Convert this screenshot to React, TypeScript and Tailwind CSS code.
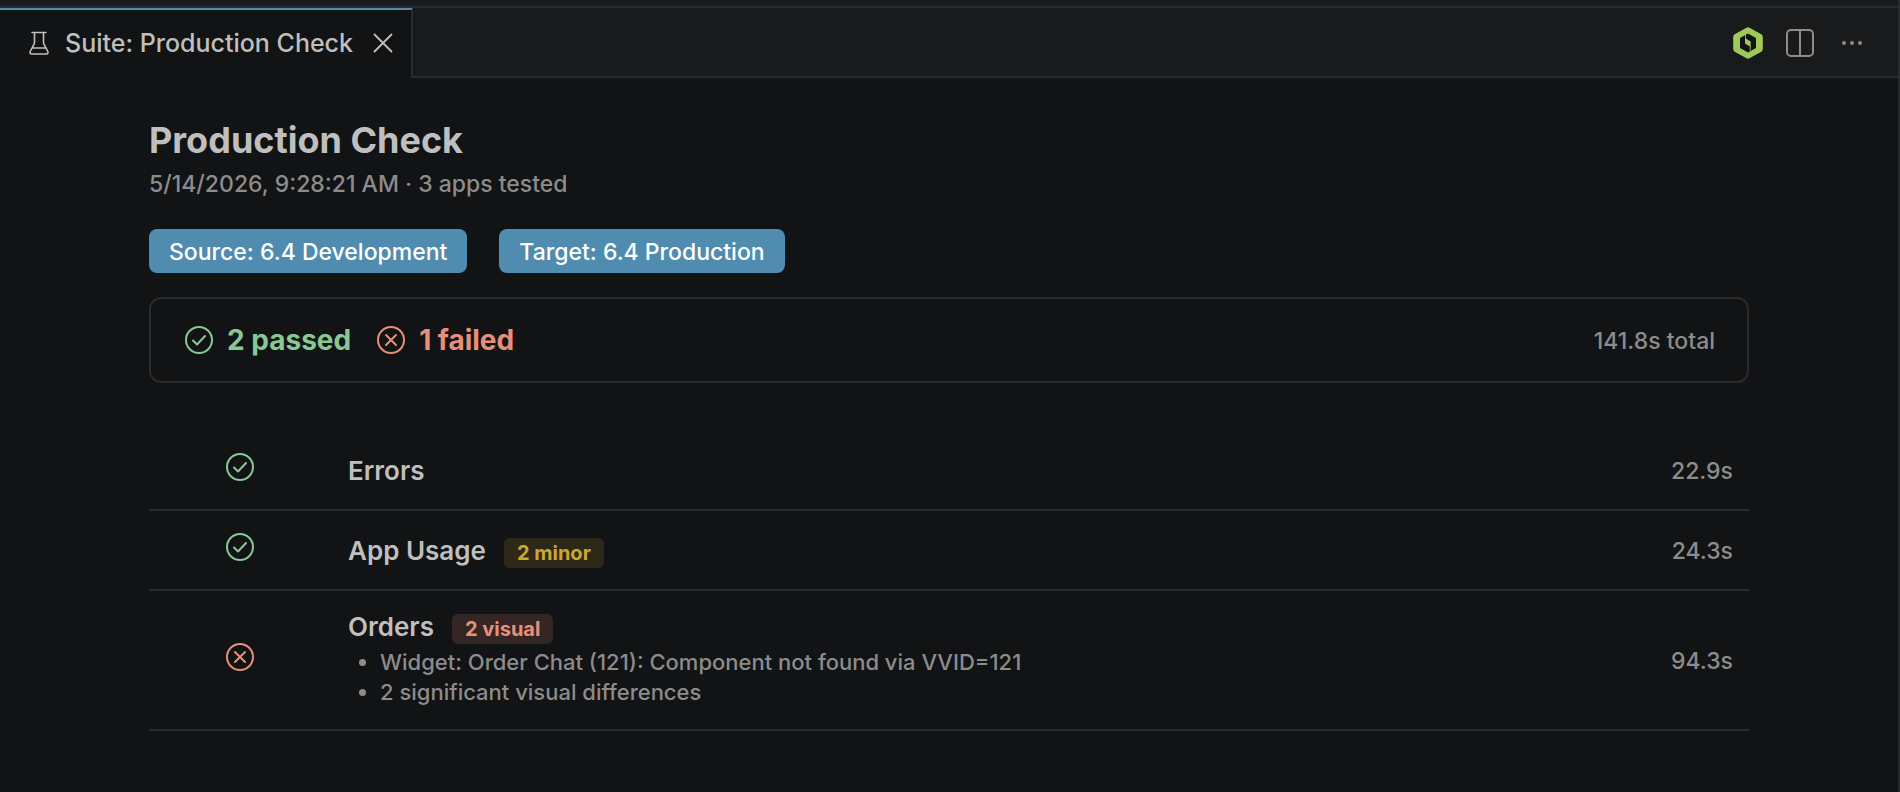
import type { ReactNode } from 'react';

type Status = 'pass' | 'fail';

interface AppResult {
  name: string;
  status: Status;
  time: string;
  tag?: { label: string; kind: 'minor' | 'visual' };
  notes?: string[];
}

const results: AppResult[] = [
  { name: 'Errors', status: 'pass', time: '22.9s' },
  { name: 'App Usage', status: 'pass', time: '24.3s', tag: { label: '2 minor', kind: 'minor' } },
  {
    name: 'Orders',
    status: 'fail',
    time: '94.3s',
    tag: { label: '2 visual', kind: 'visual' },
    notes: [
      'Widget: Order Chat (121): Component not found via VVID=121',
      '2 significant visual differences',
    ],
  },
];

const tagStyles = {
  minor: 'bg-[#2d2818] text-[#c9a931]',
  visual: 'bg-[#342624] text-[#e88f7a]',
};

function StatusIcon({ status }: { status: Status }) {
  const color = status === 'pass' ? 'text-[#86c995]' : 'text-[#e88f7a]';
  return (
    <svg
      className={`block size-8 ${color}`}
      viewBox="0 0 32 32"
      fill="none"
      stroke="currentColor"
      strokeWidth="2"
      strokeLinecap="round"
      strokeLinejoin="round"
    >
      <circle cx="16" cy="16" r="13" />
      {status === 'pass' ? <path d="M10 16.5l4 4 8-8.5" /> : <path d="M11 11l10 10M21 11L11 21" />}
    </svg>
  );
}

function BeakerIcon() {
  return (
    <svg
      className="block size-8 text-[#bfbfbf]"
      viewBox="0 0 32 32"
      fill="none"
      stroke="currentColor"
      strokeWidth="1.6"
      strokeLinecap="round"
      strokeLinejoin="round"
    >
      <path d="M9 5.5h14M11.5 5.5V15c0 1-.3 1.800-.7 2.700L7.200 24.500c-.6 1.300.1 2.500 1.500 2.500h14.600c1.400 0 2.100-1.200 1.500-2.500L21.200 17.700c-.4-.9-.7-1.700-.7-2.700V5.500M9.500 21h13" />
    </svg>
  );
}

function Badge({ children }: { children: ReactNode }) {
  return (
    <span className="rounded-lg bg-[#4f8cb0] px-5 pt-[7px] pb-[5px] text-[23px] leading-8 font-medium text-white">
      {children}
    </span>
  );
}

function TabBar() {
  return (
    <header className="flex border-t-2 border-[#2a2b2c] bg-[#191a1b]">
      <div className="flex h-[70px] items-center border-t-2 border-r-2 border-t-[#4f8cb0] border-r-[#2a2b2c] bg-[#121314] pr-3 pb-0.5 pl-[23px]">
        <BeakerIcon />
        <span className="ml-2.5 text-[25px] leading-8 font-medium text-[#bfbfbf]">Suite: Production Check</span>
        <button type="button" aria-label="Close tab" className="ml-3.5 text-[#bfbfbf]">
          <svg className="block size-8" viewBox="0 0 32 32" stroke="currentColor" strokeWidth="1.8" strokeLinecap="round">
            <path d="M7.5 7.500l17 17M24.500 7.500l-17 17" />
          </svg>
        </button>
      </div>
      <div className="flex flex-1 items-center justify-end gap-5 border-b-2 border-[#2a2b2c] pt-0.5 pr-[30px] text-[#8c8c8c]">
        <button type="button" aria-label="Run suite">
          <svg className="block size-8" viewBox="0 0 32 32">
            <path
              d="M14.500.700q1.500-.9 3 0l11.800 6.600q1.500.9 1.500 2.600v12.200q0 1.700-1.500 2.600l-11.800 6.600q-1.500.9-3 0L2.700 24.700q-1.500-.9-1.500-2.600V9.900q0-1.700 1.500-2.600z"
              fill="#a0c957"
            />
            <path d="M16 6.500l8 4.500v10l-8 4.500L8 21V11z" fill="#121314" />
            <path d="M13 7.500h.8v4l4.900 3v9l-.9.5v-4.500l-4.800-3z" fill="#a0c957" />
          </svg>
        </button>
        <button type="button" aria-label="Split editor">
          <svg className="block size-8" viewBox="0 0 32 32" fill="none" stroke="currentColor" strokeWidth="2">
            <rect x="3" y="3" width="26" height="26" rx="4" />
            <path d="M16 3v26" />
          </svg>
        </button>
        <button type="button" aria-label="More actions">
          <svg className="block size-8" viewBox="0 0 32 32" fill="currentColor">
            <circle cx="8" cy="16" r="2" />
            <circle cx="16" cy="16" r="2" />
            <circle cx="24" cy="16" r="2" />
          </svg>
        </button>
      </div>
    </header>
  );
}

function ResultRow({ result }: { result: AppResult }) {
  return (
    <tr className="h-20">
      <td className="w-[183px] border-b-2 border-[#2a2b2c] pr-px pb-1.5">
        <div className="flex justify-center">
          <StatusIcon status={result.status} />
        </div>
      </td>
      <td className="border-b-2 border-[#2a2b2c] px-4 pt-[19px] pb-[17px]">
        <div className="flex items-center gap-[18px]">
          <span className="text-[26px] leading-8 font-semibold text-[#bfbfbf]">{result.name}</span>
          {result.tag && (
            <span className={`mt-1 rounded-md px-[13px] text-xl leading-[30px] font-bold ${tagStyles[result.tag.kind]}`}>
              {result.tag.label}
            </span>
          )}
        </div>
        {result.notes && (
          <ul className="mt-[3px] mb-[5px] list-disc pl-8 text-[22px] leading-[30px] font-medium">
            {result.notes.map((note) => (
              <li key={note}>{note}</li>
            ))}
          </ul>
        )}
      </td>
      <td className="border-b-2 border-[#2a2b2c] px-4 pt-0.5 text-right text-[23px] leading-8 font-medium">
        {result.time}
      </td>
    </tr>
  );
}

export default function App() {
  return (
    <div className="min-h-screen border-r-2 border-[#2a2b2c] bg-[#121314] font-['Inter',sans-serif] text-[#8c8c8c]">
      <div className="h-1.5 bg-[#191a1b]" />
      <TabBar />
      <main className="mx-auto max-w-[1600px] pt-10">
        <h1 className="text-4xl leading-11 font-bold text-[#bfbfbf]">Production Check</h1>
        <p className="mt-1 text-[23px] leading-9 font-medium">5/14/2026, 9:28:21 AM · 3 apps tested</p>
        <div className="mt-[27px] flex gap-8">
          <Badge>Source: 6.4 Development</Badge>
          <Badge>Target: 6.4 Production</Badge>
        </div>
        <section className="mt-6 flex h-[86px] items-center rounded-xl border-2 border-[#2a2b2c] px-8">
          <div className="flex flex-1 gap-6 text-[28px] leading-8 font-bold">
            <span className="flex items-center gap-3 text-[#86c995]">
              <StatusIcon status="pass" />2 passed
            </span>
            <span className="flex items-center gap-3 text-[#e88f7a]">
              <StatusIcon status="fail" />1 failed
            </span>
          </div>
          <span className="pt-0.5 text-[23px] leading-8 font-medium">141.8s total</span>
        </section>
        <table className="mt-12 w-full border-separate border-spacing-0">
          <tbody>
            {results.map((result) => (
              <ResultRow key={result.name} result={result} />
            ))}
          </tbody>
        </table>
      </main>
    </div>
  );
}
